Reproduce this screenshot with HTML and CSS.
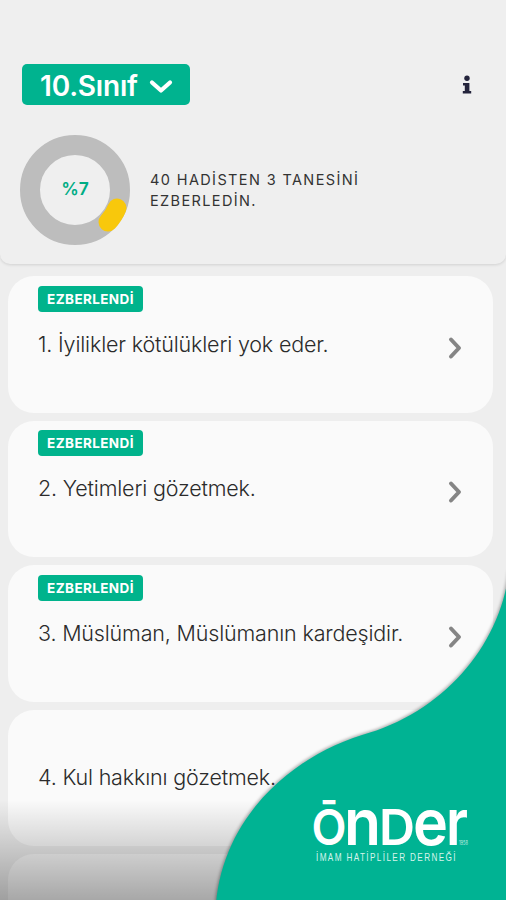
FILE: index.html
```
<!DOCTYPE html>
<html lang="tr">
<head>
  <meta charset="UTF-8">
  <meta name="viewport" content="width=device-width, initial-scale=1.0">
  <title>40 Hadis</title>
  <link rel="stylesheet" href="styles.css">
</head>
<body>
  <header class="header">
    <div class="top-bar">
      <button class="class-select">
        <span class="class-name">10.Sınıf</span>
        <svg width="24" height="16" viewBox="0 0 24 16"><path d="M3 4.500 L12 12.500 L21 4.500"/></svg>
      </button>
      <svg class="info" width="10" height="20" viewBox="0 0 10 20">
        <circle cx="5" cy="3.3" r="2.7"/>
        <path d="M1 8h6.4v8H9.2v2.6H.8V16h2v-5.400H1z"/>
      </svg>
    </div>
    <div class="progress">
      <div class="ring">
        <svg width="110" height="110" viewBox="0 0 110 110">
          <circle class="ring-track" cx="55" cy="55" r="45"/>
          <path class="ring-value" d="M97 73 A45 45 0 0 1 88 87"/>
        </svg>
        <span class="ring-label">%7</span>
      </div>
      <p class="progress-text">40 HADİSTEN 3 TANESİNİ<br>EZBERLEDİN.</p>
    </div>
  </header>

  <main class="list">
    <a class="card">
      <span class="badge">EZBERLENDİ</span>
      <span class="title">1. İyilikler kötülükleri yok eder.</span>
      <svg class="arrow" width="16" height="24" viewBox="0 0 16 24"><path d="M4 3.500 L12 12 L4 20.500"/></svg>
    </a>
    <a class="card">
      <span class="badge">EZBERLENDİ</span>
      <span class="title">2. Yetimleri gözetmek.</span>
      <svg class="arrow" width="16" height="24" viewBox="0 0 16 24"><path d="M4 3.500 L12 12 L4 20.500"/></svg>
    </a>
    <a class="card">
      <span class="badge">EZBERLENDİ</span>
      <span class="title">3. Müslüman, Müslümanın kardeşidir.</span>
      <svg class="arrow" width="16" height="24" viewBox="0 0 16 24"><path d="M4 3.500 L12 12 L4 20.500"/></svg>
    </a>
    <a class="card">
      <span class="title">4. Kul hakkını gözetmek.</span>
    </a>
    <a class="card"></a>
  </main>

  <div class="fade"></div>

  <!-- Önder logosu -->
  <svg class="brand" width="306" height="350" viewBox="200 550 306 350">
    <path class="wave" d="M509 572 C499 648 442 713 362 735 C295 756 224 813 216 904 L514 904 L514 572 Z"/>
    <text class="logo" y="845">
      <tspan class="upper" x="311.500" textLength="35" lengthAdjust="spacingAndGlyphs">Ō</tspan><tspan class="lower" x="344" textLength="37" lengthAdjust="spacingAndGlyphs">n</tspan><tspan class="upper" x="379" textLength="36" lengthAdjust="spacingAndGlyphs">D</tspan><tspan class="lower" x="413" textLength="35" lengthAdjust="spacingAndGlyphs">e</tspan><tspan class="lower" x="446" textLength="22" lengthAdjust="spacingAndGlyphs">r</tspan>
    </text>
    <text class="logo-year" x="459" y="845" textLength="9" lengthAdjust="spacingAndGlyphs">1958</text>
    <text class="logo-sub" transform="translate(316 861) scale(0.78 1)" textLength="179">İMAM HATİPLİLER DERNEĞİ</text>
  </svg>
</body>
</html>
```
FILE: styles.css
```
* {
  margin: 0;
  padding: 0;
  box-sizing: border-box;
}
body {
  position: relative;
  height: 900px;
  overflow: hidden;
  background: #eeeeee;
  font-family: Inter, "Liberation Sans", sans-serif;
}
.header {
  height: 264px;
  padding: 64px 20px 0;
  background: #efefef;
  border-radius: 0 0 10px 10px;
  box-shadow: 0 1px 3px rgba(0,0,0,0.12);
}
.top-bar {
  display: flex;
  justify-content: space-between;
  align-items: center;
  height: 41px;
  padding: 0 14px 0 2px;
}
.class-select {
  display: flex;
  align-items: center;
  gap: 11px;
  width: 168px;
  height: 41px;
  padding: 3px 0 0 18px;
  border: none;
  border-radius: 5px;
  background: #00b38f;
  color: white;
  font-family: inherit;
  font-size: 28px;
  font-weight: 600;
  letter-spacing: -0.2px;
}
.class-select path {
  fill: none;
  stroke: white;
  stroke-width: 4.2;
  stroke-linecap: round;
  stroke-linejoin: round;
}
.info {
  fill: #24243c;
}
.progress {
  display: flex;
  align-items: center;
  gap: 20px;
  margin-top: 30px;
}
.ring {
  display: grid;
  width: 110px;
  height: 110px;
}
.ring svg,
.ring-label {
  grid-area: 1 / 1;
}
.ring-label {
  place-self: center;
  margin-top: -4px;
  color: #00ad85;
  font-size: 17.5px;
  font-weight: 600;
}
.ring-track {
  fill: none;
  stroke: #bdbdbd;
  stroke-width: 20;
}
.ring-value {
  fill: none;
  stroke: #f8c80c;
  stroke-width: 19;
  stroke-linecap: round;
}
.progress-text {
  color: #333;
  font-size: 14.5px;
  line-height: 21px;
  letter-spacing: 1.38px;
}
.list {
  display: flex;
  flex-direction: column;
  gap: 8px;
  height: 636px;
  padding: 12px 13px 0 8px;
  overflow: hidden;
}
.card {
  position: relative;
  display: flex;
  flex-shrink: 0;
  align-items: center;
  justify-content: space-between;
  height: 136.5px;
  padding: 0 30px;
  background: #fafafa;
  border-radius: 26px;
}
.badge {
  position: absolute;
  top: 9.5px;
  left: 30px;
  width: 105px;
  height: 26px;
  border-radius: 4px;
  background: #00b38c;
  color: white;
  font-size: 13.5px;
  font-weight: 700;
  line-height: 27px;
  letter-spacing: 0.4px;
  text-align: center;
}
.title {
  margin-top: -1px;
  color: #2b2b2b;
  font-size: 21.5px;
  font-weight: 300;
  letter-spacing: -0.17px;
  white-space: nowrap;
}
.arrow {
  margin-top: 7px;
}
.arrow path {
  fill: none;
  stroke: #858585;
  stroke-width: 4;
  stroke-linecap: round;
  stroke-linejoin: round;
}
.fade {
  position: absolute;
  left: 0;
  right: 0;
  bottom: 0;
  height: 100px;
  background: linear-gradient(rgba(0,0,0,0), rgba(0,0,0,0.33));
}
.brand {
  position: absolute;
  right: 0;
  bottom: 0;
}
.wave {
  fill: #00b393;
  filter: drop-shadow(-1px -1px 1.5px rgba(0,0,0,0.3));
}
.logo {
  fill: white;
  font-weight: 600;
}
.upper {
  font-size: 49px;
}
.lower {
  font-size: 64px;
}
.logo-year {
  fill: #c5eee4;
  font-size: 6px;
}
.logo-sub {
  fill: #d6f3ec;
  font-family: "Liberation Sans", sans-serif;
  font-size: 10.5px;
}
```
